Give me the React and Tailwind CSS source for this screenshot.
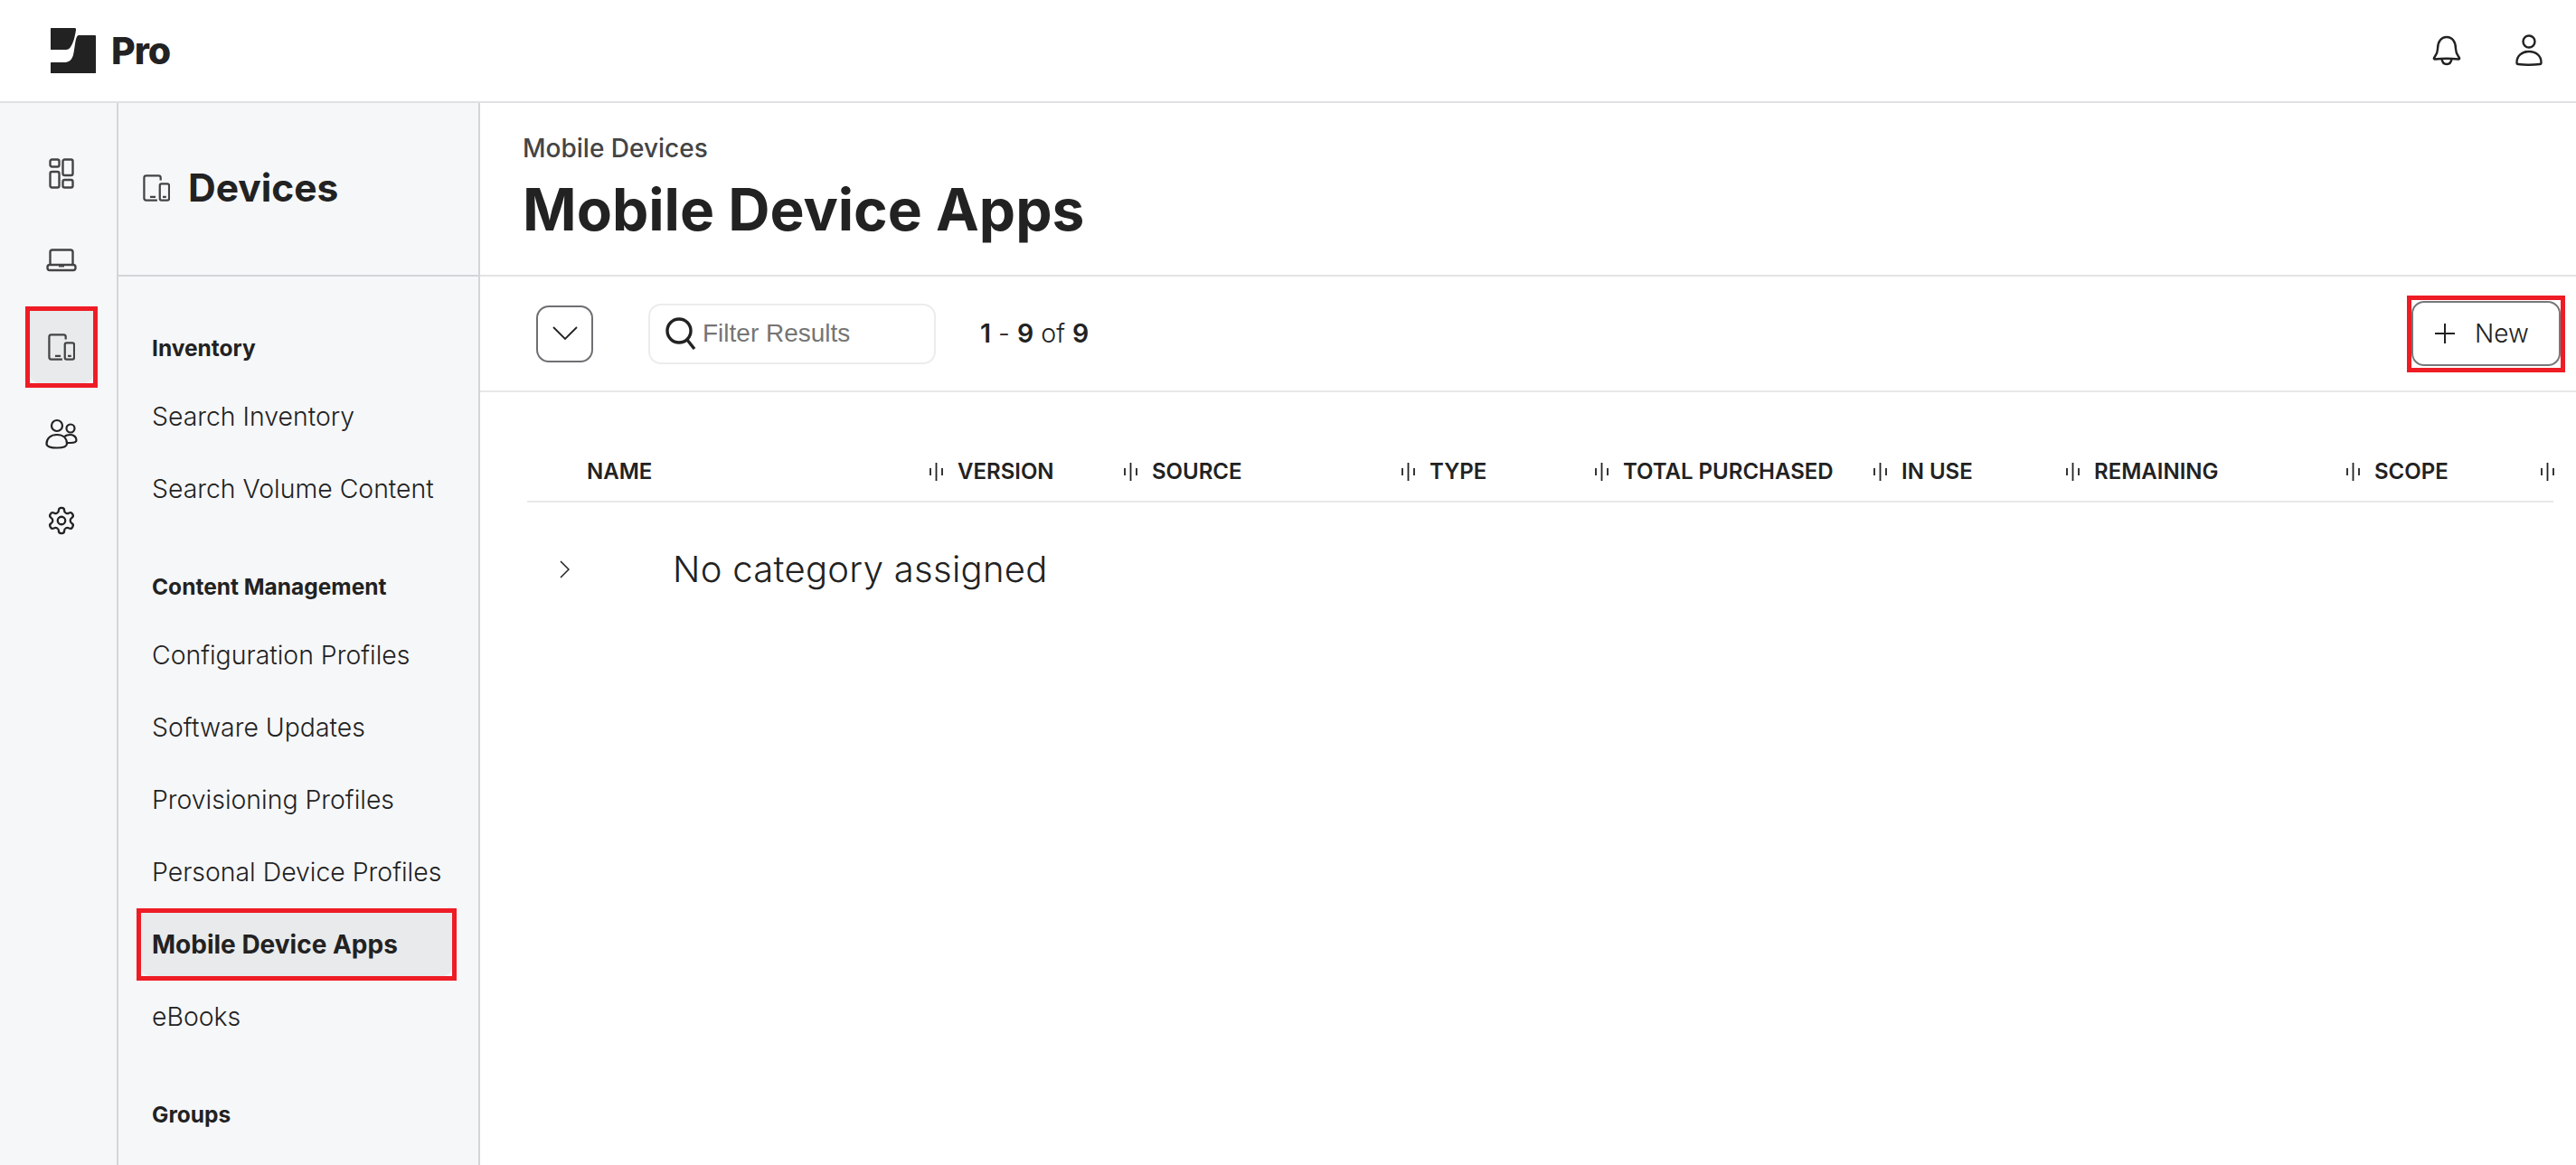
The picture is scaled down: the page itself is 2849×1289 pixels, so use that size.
import React from 'react';

const Logo = () => (
  <svg width="50" height="50" viewBox="0 0 50 50" fill="#222">
    <path d="M1 0H27C28 0 28 1 28 2C27 9 25 17 22 21C21 23 19 24 17 24H1C0 24 0 24 0 23V1C0 0 0 0 1 0Z" />
    <path d="M31 8H49C50 8 50 9 50 9V49C50 50 50 50 49 50H1C0 50 0 50 0 49V39C0 38 0 38 1 38H15C20 38 23 36 25 30C27 23 27 8 31 8Z" />
  </svg>
);

const DashboardIcon = () => (
  <svg width="28" height="34" viewBox="0 0 28 34" fill="none" stroke="#444" strokeWidth="2.4">
    <rect x="1.500" y="1.500" width="10" height="8" rx="2" />
    <rect x="1.500" y="15" width="10" height="17.500" rx="2" />
    <rect x="15.500" y="1.500" width="11" height="17.500" rx="2" />
    <rect x="15.500" y="24" width="11" height="8.500" rx="2" />
  </svg>
);

const LaptopIcon = () => (
  <svg width="34" height="26" viewBox="0 0 34 26" fill="none" stroke="#444" strokeWidth="2.400">
    <path d="M4.500 18V4C4.500 2.500 5.500 1.500 7 1.500H27C28.500 1.500 29.500 2.500 29.500 4V18" />
    <rect x="1.500" y="18" width="31" height="6" rx="2.500" />
    <path d="M14 19.500H20" strokeWidth="2" />
  </svg>
);

const DevicesIcon = () => (
  <svg width="30" height="30" viewBox="0 0 32 32" fill="none" stroke="#444" strokeWidth="2.400">
    <path d="M21 7V4C21 2.500 20 1.500 18.500 1.500H4C2.500 1.500 1.500 2.500 1.500 4V28C1.500 29.500 2.500 30.500 4 30.500H17" />
    <rect x="20" y="11" width="11" height="19.500" rx="2" />
    <path d="M8.500 26.500H15M23.500 26.500H27.500" />
  </svg>
);

const UsersIcon = () => (
  <svg width="36" height="34" viewBox="0 0 36 34" fill="none" stroke="#222" strokeWidth="2.200">
    <circle cx="13" cy="8" r="6" />
    <circle cx="28" cy="11" r="4.500" />
    <path d="M1.500 28C1.500 22 6 18 13 18C20 18 24 22 24 28C24 31 20 32.500 13 32.500C6 32.500 1.500 31 1.500 28Z" />
    <path d="M21.500 20C23 18.500 25.500 18 28 18C32 18 34.500 21 34.500 24C34.500 26 32 27 28 27H24" />
  </svg>
);

const GearIcon = () => (
  <svg width="34" height="34" viewBox="0 0 24 24" fill="none" stroke="#222" strokeWidth="1.600" strokeLinecap="round" strokeLinejoin="round">
    <path d="M12.220 2h-.440a2 2 0 0 0-2 2v.180a2 2 0 0 1-1 1.730l-.430.250a2 2 0 0 1-2 0l-.150-.080a2 2 0 0 0-2.730.730l-.220.380a2 2 0 0 0 .730 2.730l.150.100a2 2 0 0 1 1 1.720v.510a2 2 0 0 1-1 1.740l-.150.090a2 2 0 0 0-.730 2.730l.220.380a2 2 0 0 0 2.730.730l.150-.080a2 2 0 0 1 2 0l.430.250a2 2 0 0 1 1 1.730V20a2 2 0 0 0 2 2h.440a2 2 0 0 0 2-2v-.180a2 2 0 0 1 1-1.730l.430-.250a2 2 0 0 1 2 0l.150.080a2 2 0 0 0 2.730-.730l.220-.390a2 2 0 0 0-.730-2.730l-.150-.080a2 2 0 0 1-1-1.740v-.500a2 2 0 0 1 1-1.740l.150-.090a2 2 0 0 0 .730-2.730l-.220-.380a2 2 0 0 0-2.730-.730l-.150.080a2 2 0 0 1-2 0l-.430-.250a2 2 0 0 1-1-1.730V4a2 2 0 0 0-2-2z" />
    <circle cx="12" cy="12" r="3" />
  </svg>
);

const BellIcon = () => (
  <svg width="32" height="34" viewBox="0 0 32 34" fill="none" stroke="#222" strokeWidth="2.400">
    <path d="M6 15C6 7 10 2 16 2C22 2 26 7 26 15C26 20 28 22 30 25C30.500 26 30 26.500 29 26.500C20 25.500 12 25.500 3 26.500C2 26.500 1.500 26 2 25C4 22 6 20 6 15Z" />
    <path d="M10.500 26C11 30 13 32 16 32C19 32 21 30 21.500 26" />
  </svg>
);

const UserIcon = () => (
  <svg width="30" height="36" viewBox="0 0 30 36" fill="none" stroke="#222" strokeWidth="2.400">
    <circle cx="15" cy="8" r="6.500" />
    <path d="M1.500 31C1.500 24 7 19 15 19C23 19 28.500 24 28.500 31C28.500 32 28 33 27 33C19 34 11 34 3 33C2 33 1.500 32 1.500 31Z" />
  </svg>
);

const Grip = () => (
  <svg width="15" height="20" viewBox="0 0 15 20" stroke="#222" strokeWidth="1.800" className="shrink-0">
    <path d="M1 6V14M7.500 0V20M14 6V14" />
  </svg>
);

const railIcons = [
  { id: 'dash', icon: <DashboardIcon /> },
  { id: 'laptop', icon: <LaptopIcon /> },
  { id: 'devices', icon: <DevicesIcon />, active: true },
  { id: 'users', icon: <UsersIcon /> },
  { id: 'gear', icon: <GearIcon /> },
];

const navSections = [
  { title: 'Inventory', items: ['Search Inventory', 'Search Volume Content'] },
  {
    title: 'Content Management',
    items: ['Configuration Profiles', 'Software Updates', 'Provisioning Profiles', 'Personal Device Profiles', 'Mobile Device Apps', 'eBooks'],
  },
  { title: 'Groups', items: [] },
];

const columns = ['VERSION', 'SOURCE', 'TYPE', 'TOTAL PURCHASED', 'IN USE', 'REMAINING', 'SCOPE', ''];

const App = () => {
  return (
    <div className="h-screen overflow-hidden bg-white text-[#222] font-['Inter',sans-serif] flex flex-col">
      <header className="h-[114px] shrink-0 border-b-2 border-[#e0e1e3] flex items-center justify-between pl-[56px] pr-[37px]">
        <div className="flex items-center gap-[17px]">
          <Logo />
          <span className="text-[41px] font-extrabold tracking-[-1px] leading-none">Pro</span>
        </div>
        <div className="flex items-center gap-[60px]">
          <BellIcon />
          <UserIcon />
        </div>
      </header>

      <div className="flex flex-1 min-h-0">
        <aside className="w-[131px] shrink-0 bg-[#f6f7f9] border-r-2 border-[#d4d5d8] flex flex-col items-center pt-[30px] pl-[6px]">
          {railIcons.map((r) => (
            <div key={r.id} className="h-[96px] w-full flex items-center justify-center">
              {r.active ? (
                <div className="w-[80px] h-[90px] border-[5px] border-[#ee1c25]">
                  <div className="h-full bg-[#e9eaec] rounded-b-[10px] flex items-center justify-center">{r.icon}</div>
                </div>
              ) : (
                r.icon
              )}
            </div>
          ))}
        </aside>

        <aside className="w-[400px] shrink-0 bg-[#f6f7f9] border-r-2 border-[#d4d5d8] flex flex-col">
          <div className="h-[192px] shrink-0 border-b-2 border-[#d4d5d8] flex items-center gap-[20px] pl-[27px] pb-[2px]">
            <DevicesIcon />
            <h2 className="text-[42.500px] font-bold leading-none">Devices</h2>
          </div>
          <nav className="pt-[43px] pl-[20px] pr-[24px]">
            {navSections.map((s) => (
              <div key={s.title} className="mb-[32px]">
                <div className="h-[72px] flex items-center pl-[17px] text-[24.500px] font-bold">{s.title}</div>
                {s.items.map((item) =>
                  item === 'Mobile Device Apps' ? (
                    <div key={item} className="h-[80px] border-[5px] border-[#ee1c25]">
                      <div className="h-full bg-[#e9eaec] rounded-b-[10px] flex items-center pl-[12px] text-[28px] font-bold whitespace-nowrap">
                        {item}
                      </div>
                    </div>
                  ) : (
                    <div key={item} className="h-[80px] flex items-center pl-[17px] text-[28.400px] font-light whitespace-nowrap">
                      {item}
                    </div>
                  )
                )}
              </div>
            ))}
          </nav>
        </aside>

        <main className="flex-1 min-w-0 flex flex-col">
          <div className="h-[192px] shrink-0 border-b-2 border-[#e4e4e4] pl-[47px] pt-[32px]">
            <div className="text-[28px] leading-[36px] font-medium text-[#444]">Mobile Devices</div>
            <h1 className="text-[64px] leading-[80px] font-bold mt-[10px]">Mobile Device Apps</h1>
          </div>

          <div className="h-[128px] shrink-0 border-b-2 border-[#e8e8e8] flex items-center pl-[62px] pr-[12px]">
            <button className="w-[63px] h-[63px] rounded-[14px] border-2 border-[#6f6f73] flex items-center justify-center">
              <svg width="28" height="16" viewBox="0 0 28 16" fill="none" stroke="#222" strokeWidth="1.800">
                <path d="M1 1L14 14L27 1" />
              </svg>
            </button>
            <div className="w-[318px] h-[67px] ml-[61px] rounded-[14px] border-2 border-[#ececec] flex items-center pl-[16px]">
              <svg width="36" height="36" viewBox="0 0 36 36" fill="none" stroke="#222" strokeWidth="3.400" className="shrink-0">
                <circle cx="16" cy="15" r="13" />
                <path d="M25 25L33 35" />
              </svg>
              <input
                placeholder="Filter Results"
                className="ml-[6px] w-[230px] bg-transparent outline-none text-[28px] font-['Liberation_Sans',sans-serif] placeholder:text-[#757575]"
              />
            </div>
            <div className="ml-[49px] text-[28.500px] font-light whitespace-nowrap">
              <span className="font-semibold">1</span> - <span className="font-semibold">9</span> of <span className="font-semibold">9</span>
            </div>
            <div className="ml-auto border-[5px] border-[#ee1c25] w-[175px] h-[85px] flex items-center justify-center">
              <button className="w-[165px] h-[72px] rounded-[14px] border-2 border-[#77777b] flex items-center gap-[22px] pl-[24px] text-[28px] font-light">
                <svg width="22" height="22" viewBox="0 0 22 22" stroke="#222" strokeWidth="2">
                  <path d="M0 11H22M11 0V22" />
                </svg>
                New
              </button>
            </div>
          </div>

          <div className="pl-[52px] pr-[25px]">
            <div className="grid grid-cols-[445px_215px_307px_214px_308px_213px_310px_215px_14px] h-[122px] items-center pt-[56px] border-b-2 border-[#e8e8e8]">
              <div className="pl-[66px] text-[24px] font-semibold">NAME</div>
              {columns.map((c, i) => (
                <div key={i} className="flex items-center gap-[16px] text-[24px] font-semibold whitespace-nowrap">
                  <Grip />
                  {c}
                </div>
              ))}
            </div>
            <div className="flex items-center h-[147px]">
              <svg width="11" height="20" viewBox="0 0 11 20" fill="none" stroke="#222" strokeWidth="1.500" className="ml-[36px]">
                <path d="M1 1L10 10L1 19" />
              </svg>
              <span className="ml-[114px] text-[40px] font-light tracking-[0.3px]">No category assigned</span>
            </div>
          </div>
        </main>
      </div>
    </div>
  );
};

export default App;
